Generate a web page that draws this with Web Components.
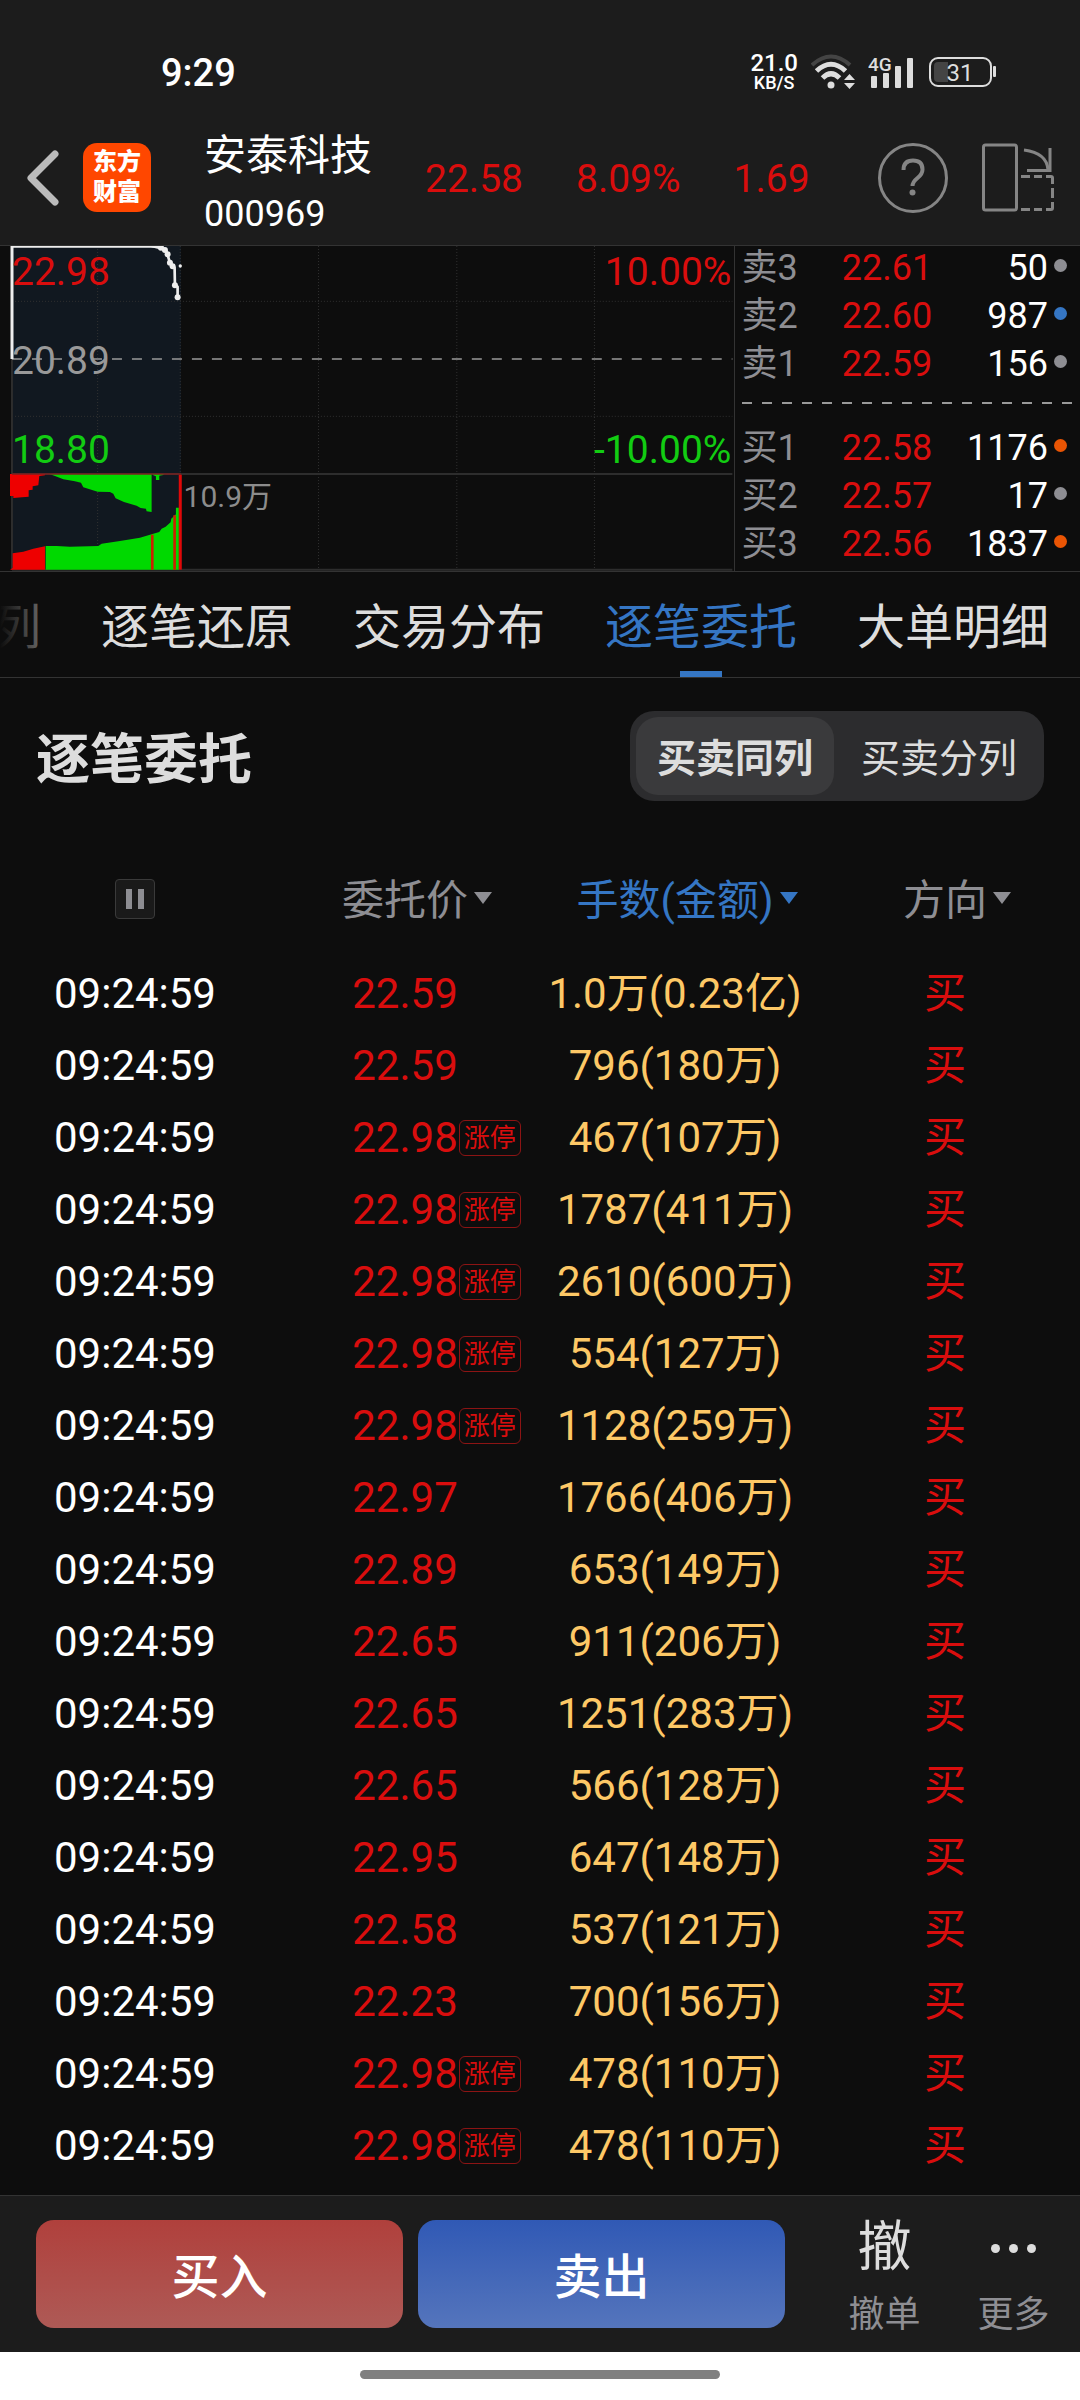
<!DOCTYPE html>
<html lang="zh-CN">
<head>
<meta charset="utf-8">
<meta name="viewport" content="width=device-width, initial-scale=1">
<title>安泰科技 000969</title>
<style>
    :root{
        --bg: #0d0d0d;
        --bar: #1c1c1c;
        --line: #333333;
        --text: #dddddd;
        --muted: #8e8e93;
        --red: #d90d0d;
        --green: #12cc12;
        --blue: #3576c4;
        --gold: #fdc866;
    }
    body{
        margin: 0;
        min-height: 100vh;
        display: flex;
        flex-direction: column;
        background: var(--bg);
        color: var(--text);
        font-family: Roboto, "Noto Sans CJK SC", sans-serif;
    }
    main{
        flex: 1;
    }
    .market{
        display: grid;
        grid-template-columns: 68% 1fr;
        border-bottom: 1px solid var(--line);
    }
    .heading{
        display: flex;
        justify-content: space-between;
        align-items: center;
        padding: 33px 36px 40px;
    }
    .heading h1{
        margin: 0;
        padding-top: 10px;
        font-size: 54px;
        line-height: 80px;
        font-weight: 700;
    }
</style>
</head>
<body>
    <status-bar time="9:29" speed="21.0" battery="31"></status-bar>
    <stock-header name="安泰科技" code="000969">
        <span>22.58</span>
        <span>8.09%</span>
        <span>1.69</span>
    </stock-header>
    <main>
        <section class="market">
            <quote-chart></quote-chart>
            <order-book></order-book>
        </section>
        <tab-strip>
            <a href="#queue">列</a>
            <a href="#restore">逐笔还原</a>
            <a href="#spread">交易分布</a>
            <a href="#orders" aria-current="page">逐笔委托</a>
            <a href="#large">大单明细</a>
        </tab-strip>
        <div class="heading">
            <h1>逐笔委托</h1>
            <segmented-toggle options="买卖同列,买卖分列"></segmented-toggle>
        </div>
        <order-table></order-table>
    </main>
    <trade-bar></trade-bar>
    <home-indicator></home-indicator>

<script>
class StatusBar extends HTMLElement{
    constructor() {
        super();
        this.attachShadow({ mode: 'open' });
    }

    connectedCallback() {
        this.shadowRoot.innerHTML = `
            <style>
                :host{
                    display: flex;
                    justify-content: space-between;
                    align-items: center;
                    height: 76px;
                    padding: 34px 83px 0 161px;
                    background: var(--bar);
                    color: #fff;
                    font-weight: 500;
                }
                .time{
                    padding-top: 2px;
                    font-size: 38px;
                }
                .icons{
                    display: flex;
                    align-items: center;
                    gap: 13px;
                }
                .speed{
                    display: flex;
                    flex-direction: column;
                    align-items: center;
                    font-size: 24px;
                    line-height: 21px;
                }
                .speed small{
                    font-size: 18px;
                    line-height: 17px;
                }
                svg{
                    display: block;
                }
            </style>
            <span class="time">${this.getAttribute('time')}</span>
            <div class="icons">
                <div class="speed">${this.getAttribute('speed')}<small>KB/S</small></div>
                <svg width="44" height="36" viewBox="0 0 44 36" fill="none">
                    <path d="M1 11 Q20 -6 39 11" stroke="#444" stroke-width="4"/>
                    <path d="M5.500 17 Q20 3.500 34.500 17" stroke="#ddd" stroke-width="5"/>
                    <path d="M11.500 24 Q20 15.500 28.500 24" stroke="#ddd" stroke-width="5"/>
                    <circle cx="20" cy="31" r="3.500" fill="#ddd"/>
                    <path d="M33 26 L38.500 20 L44 26 Z M33 29 L38.500 35 L44 29 Z" fill="#ddd"/>
                </svg>
                <svg width="48" height="36" viewBox="0 0 48 36" fill="#ddd">
                    <text x="0" y="17" font-size="19">4G</text>
                    <rect x="3" y="22" width="6" height="12" rx="1"/>
                    <rect x="15" y="19" width="6" height="15" rx="1"/>
                    <rect x="27" y="12" width="6" height="22" rx="1"/>
                    <rect x="39" y="4" width="6" height="30" rx="1"/>
                </svg>
                <svg width="68" height="32" viewBox="0 0 68 32">
                    <rect x="1" y="2" width="61" height="28" rx="8" fill="none" stroke="#ddd" stroke-width="2"/>
                    <path d="M9 6 H19 V26 H9 Q5 26 5 22 V10 Q5 6 9 6 Z" fill="#444"/>
                    <rect x="64" y="10" width="3" height="11" rx="1" fill="#ddd"/>
                    <text x="31" y="25" text-anchor="middle" font-size="24" font-weight="400" fill="#ddd">${this.getAttribute('battery')}</text>
                </svg>
            </div>
        `;
    }
}

class StockHeader extends HTMLElement{
    constructor() {
        super();
        this.attachShadow({ mode: 'open' });
    }

    connectedCallback() {
        this.shadowRoot.innerHTML = `
            <style>
                :host{
                    display: flex;
                    align-items: center;
                    height: 135px;
                    padding: 0 25px;
                    background: var(--bar);
                    border-bottom: 1px solid var(--line);
                }
                button{
                    display: block;
                    padding: 0;
                    border: none;
                    background: none;
                    cursor: pointer;
                }
                svg{
                    display: block;
                }
                .logo{
                    display: flex;
                    flex-direction: column;
                    justify-content: center;
                    box-sizing: border-box;
                    width: 68px;
                    height: 69px;
                    margin-left: 22px;
                    padding-bottom: 2px;
                    border-radius: 14px;
                    background: #ff4700;
                    color: #fff;
                    font-size: 24px;
                    line-height: 30px;
                    font-weight: 900;
                    text-align: center;
                }
                .stock{
                    margin-left: 53px;
                    padding-top: 15px;
                    color: #fff;
                    line-height: 58px;
                }
                .name{
                    font-size: 42px;
                }
                .code{
                    font-size: 36px;
                }
                .quote{
                    display: flex;
                    gap: 53px;
                    margin-left: 53px;
                    padding-top: 3px;
                    color: var(--red);
                    font-size: 39px;
                }
                .tools{
                    display: flex;
                    gap: 33px;
                    margin-left: auto;
                }
            </style>
            <button aria-label="返回">
                <svg width="36" height="58" viewBox="0 0 36 58" fill="none" stroke="#bbb" stroke-width="7" stroke-linecap="round" stroke-linejoin="round">
                    <path d="M30 5 L6 29 L30 53"/>
                </svg>
            </button>
            <div class="logo"><span>东方</span><span>财富</span></div>
            <div class="stock">
                <div class="name">${this.getAttribute('name')}</div>
                <div class="code">${this.getAttribute('code')}</div>
            </div>
            <div class="quote"><slot></slot></div>
            <div class="tools">
                <button aria-label="帮助">
                    <svg width="70" height="70" viewBox="0 0 70 70" fill="none" stroke="#858585">
                        <circle cx="35" cy="35" r="33.500" stroke-width="3"/>
                        <path d="M25.500 27 Q25.500 17.500 35 17.500 Q44.500 17.500 44.500 26.500 Q44.500 31 39.500 35 Q34.500 39 34.500 43" stroke-width="4"/>
                        <circle cx="34.500" cy="49.500" r="3" fill="#858585" stroke="none"/>
                    </svg>
                </button>
                <button aria-label="横屏">
                    <svg width="74" height="70" viewBox="0 0 74 70" fill="none" stroke="#858585" stroke-width="3">
                        <rect x="2.500" y="2" width="33" height="65" rx="2"/>
                        <path d="M43 7 Q66 10 67 27"/>
                        <path d="M46 27.500 H69 V5"/>
                        <path d="M40 33.500 H49 M53 33.500 H61 M65 33.500 H70 Q71.500 33.500 71.500 35 V41 M71.500 45 V55 M71.500 59 V65 Q71.500 66.500 70 66.500 H65 M61 66.500 H53 M49 66.500 H40"/>
                    </svg>
                </button>
            </div>
        `;
    }
}

class QuoteChart extends HTMLElement{
    constructor() {
        super();
        this.attachShadow({ mode: 'open' });
        this.shadowRoot.innerHTML = `
            <style>
                :host{
                    display: block;
                    position: relative;
                    height: 325px;
                    font-size: 39px;
                }
                svg{
                    display: block;
                    width: 100%;
                    height: 100%;
                }
                .labels{
                    position: absolute;
                    top: 4px;
                    left: 12px;
                    right: 3px;
                    display: flex;
                    flex-direction: column;
                    gap: 45px;
                    line-height: 44px;
                }
                .labels div{
                    display: flex;
                    justify-content: space-between;
                }
                .up{
                    color: var(--red);
                }
                .flat{
                    color: #999;
                }
                .down{
                    color: var(--green);
                }
                .volume{
                    position: absolute;
                    top: 231px;
                    left: 25%;
                    color: #8c8c8c;
                    font-size: 30px;
                    line-height: 40px;
                }
            </style>
            <svg viewBox="0 0 2204 975" preserveAspectRatio="none" fill="none">
                <rect x="36" y="0" width="507" height="971" fill="#111820"/>
                <path stroke="#303030" stroke-width="3" stroke-dasharray="3 6"
                    d="M293 0 V971 M541 0 V971 M956 0 V971 M1371 0 V971 M1784 0 V971 M36 166 H2198 M36 511 H2198"/>
                <path stroke="#2d2d2d" stroke-width="6" d="M36 0 V971 M36 684 H2198 M36 971 H2198"/>
                <path stroke="#999" stroke-width="5" stroke-dasharray="30 30" d="M36 339 H2198"/>

                <!-- order imbalance, hanging from the top -->
                <path fill="#ee0000" d="M30 684 H135 V688 L118 690 L115 718 L98 721 V731 L86 733 V752 L66 754 L40 756 V750 H30 Z"/>
                <path fill="#00d900" d="M148 684 H455 V798 L440 796 L438 788 L422 786 L410 779 L372 768 L347 757 L340 743 L330 738 L293 737 L250 724 L243 710 L225 706 L190 700 L165 690 Z"/>
                <path fill="#00d900" d="M458 684 H492 L490 687 L478 689 V702 H468 V691 L460 688 Z"/>

                <!-- volume bars -->
                <path fill="#ee0000" d="M30 971 L38 966 V922 L70 917 L100 908 L135 901 V971 Z"/>
                <path fill="#00d900" d="M137 971 V900 H170 L210 902 L295 900 L305 893 L360 885 L420 875 L455 865 L478 858 L485 848 L497 842 L512 829 L514 818 L528 805 V785 H537 V971 Z"/>
                <path stroke="#cc2200" stroke-width="8" d="M457 866 V971 M524 808 V971"/>
                <path stroke="#e00808" stroke-width="9" d="M541 686 V971"/>
                <path stroke="#7a2020" stroke-width="4" d="M36 684 H543"/>

                <path stroke="#eee" stroke-width="9" d="M36 339 V0"/>
                <path stroke="#eee" stroke-width="6" d="M36 2 H480"/>
                <path stroke="#eee" stroke-width="8" stroke-linejoin="round" d="M455 0 L480 6 L497 10 L503 27 L510 50 L524 65 L525 118 L533 122 V155"/>
                <g fill="#eee">
                    <circle cx="483" cy="5" r="9"/>
                    <circle cx="495" cy="12" r="9"/>
                    <circle cx="503" cy="25" r="9"/>
                    <circle cx="510" cy="50" r="9"/>
                    <circle cx="518" cy="61" r="9"/>
                    <circle cx="525" cy="118" r="9"/>
                    <circle cx="533" cy="154" r="9"/>
                    <circle cx="541" cy="60" r="5"/>
                </g>
            </svg>
            <div class="labels">
                <div class="up"><span>22.98</span><span>10.00%</span></div>
                <div class="flat"><span>20.89</span></div>
                <div class="down"><span>18.80</span><span>-10.00%</span></div>
            </div>
            <span class="volume">10.9万</span>
        `;
    }
}

const asks = [
    ['卖3', '22.61', '50', '#8e8e93'],
    ['卖2', '22.60', '987', '#3576c4'],
    ['卖1', '22.59', '156', '#8e8e93']
];
const bids = [
    ['买1', '22.58', '1176', '#ea5504'],
    ['买2', '22.57', '17', '#8e8e93'],
    ['买3', '22.56', '1837', '#ea5504']
];

class OrderBook extends HTMLElement{
    constructor() {
        super();
        this.attachShadow({ mode: 'open' });
        this.shadowRoot.innerHTML = `
            <style>
                :host{
                    display: block;
                    padding-top: 1px;
                    border-left: 1px solid var(--line);
                    font-size: 36px;
                    line-height: 42px;
                }
                .side{
                    display: flex;
                    flex-direction: column;
                    gap: 6px;
                    padding: 0 13px 0 6px;
                }
                .level{
                    display: grid;
                    grid-template-columns: 29% 1fr auto 13px;
                    column-gap: 6px;
                }
                .label{
                    color: var(--muted);
                }
                .price{
                    color: var(--red);
                }
                .count{
                    color: #fff;
                }
                .dot{
                    width: 13px;
                    height: 13px;
                    margin-top: 12px;
                    border-radius: 50%;
                }
                svg{
                    display: block;
                    width: 100%;
                    height: 42px;
                }
            </style>
            <div class="side">${asks.map(this.level).join('')}</div>
            <svg><line x1="7" y1="18" x2="98%" y2="18" stroke="#999" stroke-width="2" stroke-dasharray="10 10"/></svg>
            <div class="side">${bids.map(this.level).join('')}</div>
        `;
    }

    level([label, price, count, color]) {
        return `
            <div class="level">
                <span class="label">${label}</span>
                <span class="price">${price}</span>
                <span class="count">${count}</span>
                <span class="dot" style="background: ${color}"></span>
            </div>
        `;
    }
}

class TabStrip extends HTMLElement{
    constructor() {
        super();
        this.attachShadow({ mode: 'open' });
        this.shadowRoot.innerHTML = `
            <style>
                :host{
                    display: block;
                    position: relative;
                    overflow: hidden;
                    border-bottom: 1px solid var(--line);
                }
                nav{
                    display: flex;
                    justify-content: flex-end;
                    gap: 60px;
                    padding-right: 31px;
                }
                /* fades the tab that is scrolled half out */
                :host::before{
                    content: '';
                    position: absolute;
                    z-index: 1;
                    top: 0;
                    bottom: 0;
                    left: 0;
                    width: 96px;
                    background: linear-gradient(to right, var(--bg), transparent);
                }
                ::slotted(a){
                    flex: none;
                    padding-top: 6px;
                    color: var(--text);
                    font-size: 48px;
                    line-height: 99px;
                    text-decoration: none;
                }
                ::slotted(a[aria-current]){
                    color: var(--blue);
                    background: linear-gradient(var(--blue), var(--blue)) center bottom / 42px 6px no-repeat;
                }
            </style>
            <nav><slot></slot></nav>
        `;
    }
}

class SegmentedToggle extends HTMLElement{
    constructor() {
        super();
        this.attachShadow({ mode: 'open' });
    }

    connectedCallback() {
        const options = this.getAttribute('options').split(',');
        this.shadowRoot.innerHTML = `
            <style>
                :host{
                    display: flex;
                    gap: 6px;
                    padding: 6px;
                    border-radius: 24px;
                    background: #2c2c2e;
                }
                button{
                    height: 78px;
                    padding: 0 21px 2px;
                    border: none;
                    border-radius: 22px;
                    background: none;
                    color: var(--text);
                    font-family: inherit;
                    font-size: 39px;
                    cursor: pointer;
                }
                button[aria-pressed='true']{
                    background: #3a3a3c;
                    font-weight: 700;
                }
            </style>
            ${options.map((text, i) => `<button aria-pressed="${i === 0}">${text}</button>`).join('')}
        `;
        const buttons = this.shadowRoot.querySelectorAll('button');
        buttons.forEach(button => button.addEventListener('click', () => {
            buttons.forEach(b => b.setAttribute('aria-pressed', b === button));
        }));
    }
}

const orders = [
    ['22.59', '1.0万(0.23亿)'],
    ['22.59', '796(180万)'],
    ['22.98', '467(107万)', true],
    ['22.98', '1787(411万)', true],
    ['22.98', '2610(600万)', true],
    ['22.98', '554(127万)', true],
    ['22.98', '1128(259万)', true],
    ['22.97', '1766(406万)'],
    ['22.89', '653(149万)'],
    ['22.65', '911(206万)'],
    ['22.65', '1251(283万)'],
    ['22.65', '566(128万)'],
    ['22.95', '647(148万)'],
    ['22.58', '537(121万)'],
    ['22.23', '700(156万)'],
    ['22.98', '478(110万)', true],
    ['22.98', '478(110万)', true]
];

class OrderTable extends HTMLElement{
    constructor() {
        super();
        this.attachShadow({ mode: 'open' });
        this.shadowRoot.innerHTML = `
            <style>
                :host{
                    display: block;
                    padding-bottom: 14px;
                    font-size: 42px;
                }
                table{
                    width: 100%;
                    table-layout: fixed;
                    border-collapse: collapse;
                    text-align: center;
                }
                th, td{
                    padding: 0;
                    font-weight: 400;
                }
                th{
                    height: 110px;
                    padding-bottom: 6px;
                }
                td{
                    height: 70px;
                    padding-top: 2px;
                    line-height: 70px;
                }
                button{
                    position: relative;
                    padding: 0;
                    border: none;
                    background: none;
                    color: var(--muted);
                    font: inherit;
                    cursor: pointer;
                }
                .sort::after{
                    content: '';
                    position: absolute;
                    left: 100%;
                    top: 50%;
                    margin: -4px 0 0 6px;
                    border: 9px solid transparent;
                    border-top: 12px solid currentColor;
                    border-bottom: none;
                }
                .active{
                    color: var(--blue);
                }
                .pause{
                    display: inline-flex;
                    justify-content: center;
                    align-items: center;
                    gap: 6px;
                    width: 40px;
                    height: 40px;
                    border: 1px solid #3a3a3a;
                    border-radius: 4px;
                    background: #1a1a1a;
                    vertical-align: middle;
                }
                .pause i{
                    width: 6px;
                    height: 20px;
                    background: var(--muted);
                }
                .time{
                    color: #fff;
                }
                .price, .side{
                    color: var(--red);
                }
                .amount{
                    color: var(--gold);
                }
                .price span{
                    position: relative;
                }
                .limit{
                    position: absolute;
                    left: 100%;
                    top: 50%;
                    margin: -18px 0 0 1px;
                    padding: 0 4px;
                    border: 1px solid #8c1414;
                    border-radius: 6px;
                    font-size: 26px;
                    line-height: 34px;
                    font-style: normal;
                    white-space: nowrap;
                }
            </style>
            <table>
                <thead>
                    <tr>
                        <th><button class="pause" aria-label="暂停"><i></i><i></i></button></th>
                        <th><button class="sort">委托价</button></th>
                        <th><button class="sort active">手数(金额)</button></th>
                        <th><button class="sort">方向</button></th>
                    </tr>
                </thead>
                <tbody>${orders.map(this.row).join('')}</tbody>
            </table>
        `;
    }

    row([price, amount, limit]) {
        return `
            <tr>
                <td class="time">09:24:59</td>
                <td class="price"><span>${price}${limit ? '<em class="limit">涨停</em>' : ''}</span></td>
                <td class="amount">${amount}</td>
                <td class="side">买</td>
            </tr>
        `;
    }
}

class TradeBar extends HTMLElement{
    constructor() {
        super();
        this.attachShadow({ mode: 'open' });
        this.shadowRoot.innerHTML = `
            <style>
                :host{
                    display: flex;
                    gap: 15px;
                    padding: 24px 2px 24px 36px;
                    border-top: 1px solid var(--line);
                    background: var(--bar);
                }
                button{
                    padding: 0;
                    border: none;
                    font-family: inherit;
                    cursor: pointer;
                }
                .trade{
                    flex: 1;
                    height: 108px;
                    padding-bottom: 3px;
                    border-radius: 18px;
                    color: #fff;
                    font-size: 48px;
                    font-weight: 500;
                }
                .buy{
                    background: linear-gradient(#b0403c, #ae5a56);
                }
                .sell{
                    background: linear-gradient(#3059b5, #5575bc);
                }
                .more{
                    display: flex;
                    margin-left: 20px;
                }
                .more button{
                    display: flex;
                    flex-direction: column;
                    align-items: center;
                    justify-content: space-between;
                    width: 129px;
                    padding-top: 1px;
                    background: none;
                    color: var(--muted);
                    font-size: 36px;
                    line-height: 26px;
                }
                .glyph{
                    display: flex;
                    align-items: center;
                    gap: 9px;
                    height: 54px;
                    color: var(--text);
                    font-size: 54px;
                }
                .glyph i{
                    width: 9px;
                    height: 9px;
                    border-radius: 50%;
                    background: currentColor;
                }
            </style>
            <button class="trade buy">买入</button>
            <button class="trade sell">卖出</button>
            <div class="more">
                <button><span class="glyph">撤</span><span>撤单</span></button>
                <button><span class="glyph"><i></i><i></i><i></i></span><span>更多</span></button>
            </div>
        `;
    }
}

class HomeIndicator extends HTMLElement{
    constructor() {
        super();
        this.attachShadow({ mode: 'open' });
        this.shadowRoot.innerHTML = `
            <style>
                :host{
                    display: flex;
                    justify-content: center;
                    padding: 18px 0 21px;
                    background: #fff;
                }
                div{
                    width: 33.3%;
                    height: 9px;
                    border-radius: 5px;
                    background: #808080;
                }
            </style>
            <div></div>
        `;
    }
}

window.customElements.define('status-bar', StatusBar);
window.customElements.define('stock-header', StockHeader);
window.customElements.define('quote-chart', QuoteChart);
window.customElements.define('order-book', OrderBook);
window.customElements.define('tab-strip', TabStrip);
window.customElements.define('segmented-toggle', SegmentedToggle);
window.customElements.define('order-table', OrderTable);
window.customElements.define('trade-bar', TradeBar);
window.customElements.define('home-indicator', HomeIndicator);
</script>
</body>
</html>
